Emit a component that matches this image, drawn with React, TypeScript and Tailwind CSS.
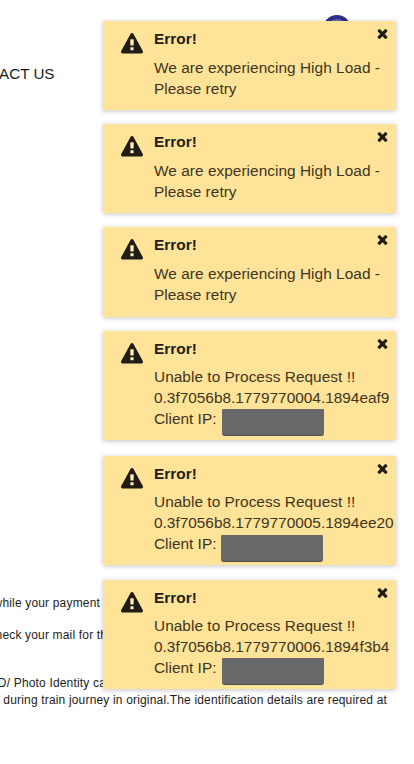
import React from "react";

function WarningIcon() {
  return (
    <svg viewBox="0 0 1792 1792" className="mt-3 ml-[18px] h-[22px] w-[22px] shrink-0" fill="#211d14">
      <path fill="#fff0c0" d="M730 620h340v800h-340z" />
      <path d="M1024 1375v-190q0-14-9.5-23.5t-22.5-9.5h-192q-13 0-22.5 9.5t-9.5 23.5v190q0 14 9.5 23.5t22.5 9.5h192q13 0 22.5-9.5t9.5-23.5zm-2-374l18-459q0-12-10-19-13-11-24-11h-220q-11 0-24 11-10 7-10 21l17 457q0 10 10 16.5t24 6.5h185q14 0 23.5-6.5t10.5-16.5zm-14-934l768 1408q35 63-2 126-17 29-46.5 46t-63.5 17h-1536q-34 0-63.5-17t-46.5-46q-37-63-2-126l768-1408q17-31 47-49t65-18 65 18 47 49z" />
    </svg>
  );
}

function CloseIcon() {
  return (
    <svg viewBox="0 0 1792 1792" className="absolute top-[5px] right-[6px] h-[15px] w-[15px]" fill="#211d14">
      <path d="M1490 1322q0 40-28 68l-136 136q-28 28-68 28t-68-28l-294-294-294 294q-28 28-68 28t-68-28l-136-136q-28-28-28-68t28-68l294-294-294-294q-28-28-28-68t28-68l136-136q28-28 68-28t68 28l294 294 294-294q28-28 68-28t68 28l136 136q28 28 28 68t-28 68l-294 294 294 294q28 28 28 68z" />
    </svg>
  );
}

function Toast({ size, children }: { size: string; children: React.ReactNode }) {
  return (
    <section className={`relative flex w-[293px] bg-[#ffe399] text-[#40351c] shadow-[0_1px_5px_rgba(0,0,0,0.24)] ${size}`}>
      <WarningIcon />
      <div className="ml-[11px] pt-[7px] text-[15.4px] leading-[21px] whitespace-nowrap">
        <h2 className="mb-2 font-bold text-[#211d14]">Error!</h2>
        {children}
      </div>
      <CloseIcon />
    </section>
  );
}

function Request({ id, bar }: { id: string; bar: string }) {
  return (
    <div className="-mt-px">
      <p className="tracking-[0.04px]">Unable to Process Request !!</p>
      <p>{id}</p>
      <p className="flex items-start">
        Client IP:
        <span className={`h-[27px] w-[102px] shrink-0 rounded-t-[1px] rounded-b-[3px] border-b border-[#4d4d50] bg-[#68696b] ${bar}`} />
      </p>
    </div>
  );
}

function Load() {
  return (
    <div className="tracking-[0.04px]">
      <p>We are experiencing High Load -</p>
      <p>Please retry</p>
    </div>
  );
}

export default function App() {
  return (
    <main className="relative h-[764px] w-[414px] overflow-hidden bg-white font-['Liberation_Sans',Arial,sans-serif] text-[#1c1c1c]">
      <div className="flex h-[590px] w-[54.5px] justify-end pt-[64px] text-[15.2px] leading-[20px] whitespace-nowrap">ACT US</div>
      <div className="flex flex-col text-[12px] leading-[18px] tracking-[0.17px] whitespace-nowrap">
        <p className="flex w-[100px] justify-end pt-[4px]">while your payment</p>
        <p className="mt-[14px] flex w-[114px] justify-end">check your mail for the</p>
        <p className="mt-[30px] flex w-[117px] justify-end">ID/ Photo Identity card</p>
        <p className="-mt-px flex w-[387px] justify-end">during train journey in original.The identification details are required at</p>
      </div>
      <div className="absolute top-[15px] left-[323px] h-[28px] w-[28px] rounded-full border-[4px] border-[#302f8c] bg-[#6d6cae]" />
      <div className="absolute top-[21px] left-[103px] flex flex-col">
        <Toast size="h-[89px]"><Load /></Toast>
        <Toast size="mt-[14px] h-[89px]"><Load /></Toast>
        <Toast size="mt-[14px] h-[90px]"><Load /></Toast>
        <Toast size="mt-[14px] h-[109px]"><Request id="0.3f7056b8.1779770004.1894eaf9" bar="ml-[6px] mt-px" /></Toast>
        <Toast size="mt-[16px] h-[109px]"><Request id="0.3f7056b8.1779770005.1894ee20" bar="ml-[5px] mt-[2px]" /></Toast>
        <Toast size="mt-[15px] h-[109px]"><Request id="0.3f7056b8.1779770006.1894f3b4" bar="ml-[6px] mt-px" /></Toast>
      </div>
    </main>
  );
}
